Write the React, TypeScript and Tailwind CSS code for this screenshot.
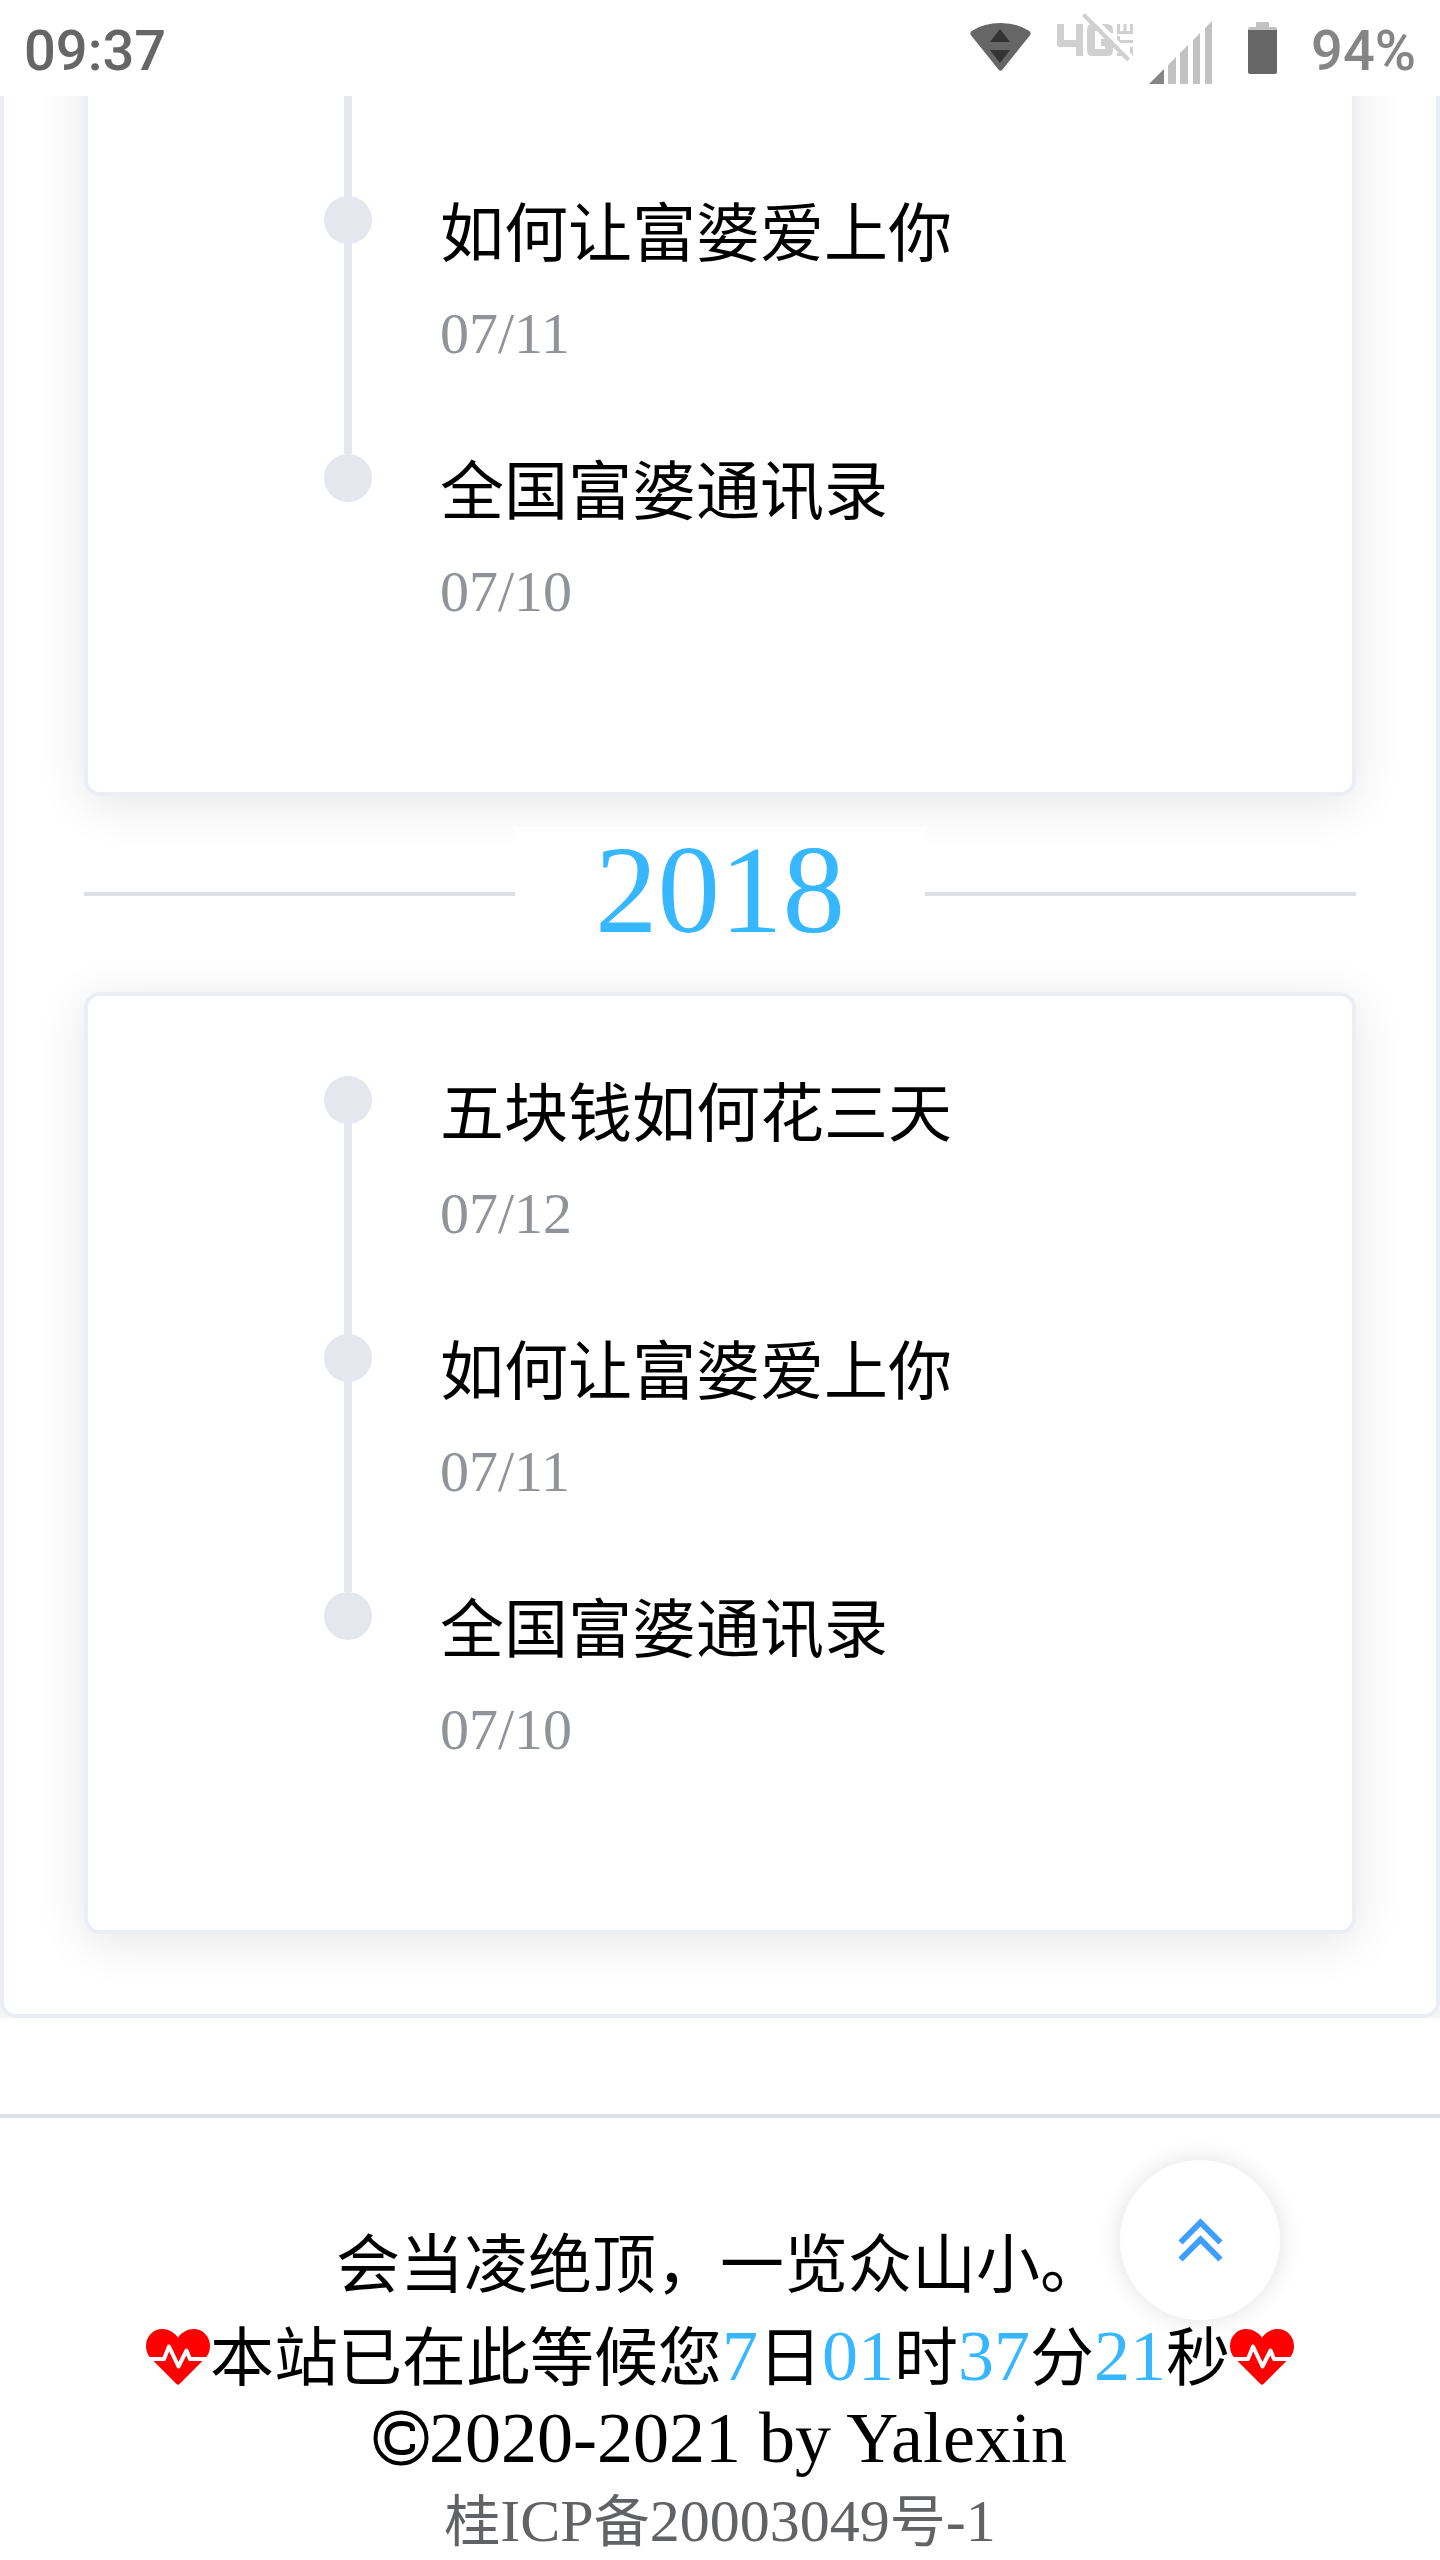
import type { ReactNode } from "react";

type Post = { title: string; date: string };

const posts: Post[] = [
  { title: "五块钱如何花三天", date: "07/12" },
  { title: "如何让富婆爱上你", date: "07/11" },
  { title: "全国富婆通讯录", date: "07/10" },
];

function WifiIcon() {
  return (
    <svg className="h-24 w-[61px]" viewBox="0 0 61 96" aria-hidden="true">
      <path
        d="M1.4 35.800Q-1.200 32.500 2.500 30.500Q14 23 30.500 23Q47 23 58.500 30.500Q62.200 32.500 59.600 35.800L32.500 69.500Q30.500 72 28.500 69.500Z"
        fill="#666"
      />
      <path d="M20 42L30 29L40 42ZM20 50H40L30 63Z" fill="#333" />
    </svg>
  );
}

function MutedLteIcon() {
  return (
    <svg className="h-24 w-[76px]" viewBox="0 0 76 96" aria-hidden="true">
      <path d="M0 24H7V40H19V24H26V56H19V47H3Q0 47 0 44Z" fill="#d0d0d0" />
      <path
        d="M36 24H50Q56 24 56 30V33H48V31H38V49H48V46H44V39H56V50Q56 56 50 56H36Q30 56 30 50V30Q30 24 36 24Z"
        fill="#d0d0d0"
      />
      <path
        d="M60 32.500H76M61.500 24V32M68 24V32M74.500 24V32M61.500 36V48M61 41.500H76M60 54.500H76M74.500 47V54"
        fill="none"
        stroke="#d0d0d0"
        strokeWidth="3"
      />
      <path d="M30 12L76 58.500" stroke="#fff" strokeWidth="4" />
      <path d="M26.500 14.500L71.500 60" stroke="#d0d0d0" strokeWidth="4" />
    </svg>
  );
}

function SignalIcon() {
  return (
    <svg className="h-24 w-[63px]" viewBox="0 0 63 96" aria-hidden="true">
      <path d="M0 84L15 69V84Z" fill="#858585" />
      <path
        d="M19 65L27 57V84H19ZM31 53L39 45V84H31ZM44 40L51 33V84H44ZM56 28L63 21V84H56Z"
        fill="#c2c2c2"
      />
    </svg>
  );
}

function BatteryIcon() {
  return (
    <svg className="h-24 w-[29px]" viewBox="0 0 29 96" aria-hidden="true">
      <path d="M8 22H21V27H27Q29 27 29 30H0Q0 27 2 27H8Z" fill="#c2c2c2" />
      <path d="M0 30H29V72Q29 74 27 74H2Q0 74 0 72Z" fill="#666" />
    </svg>
  );
}

function HeartbeatIcon() {
  return (
    <svg className="h-14 w-16 shrink-0" viewBox="0 0 64 56" aria-hidden="true">
      <path
        d="M32 8.500C28 3 22 0 16.500 0C7 0 0 7.500 0 17C0 22 1.500 26 5 29.500L30.500 55Q32 56.500 33.500 55L59 29.500C62.500 26 64 22 64 17C64 7.500 57 0 47.500 0C42 0 36 3 32 8.500Z"
        fill="#f00"
      />
      <path
        d="M0 30H18L23 17.500L32.500 37.500L40.500 21.500L44 30H64"
        fill="none"
        stroke="#fff"
        strokeWidth="4"
        strokeLinejoin="round"
      />
    </svg>
  );
}

function CopyrightIcon() {
  return (
    <svg className="h-14 w-14 shrink-0" viewBox="0 0 56 56" fill="none" stroke="#000" aria-label="©">
      <circle cx="28" cy="28" r="25.500" strokeWidth="4" />
      <path d="M39.500 21V19Q39.500 13.500 28.500 13.500Q14 13.500 14 28Q14 42.500 28.500 42.500Q39.500 42.500 39.500 37V34" strokeWidth="5" />
    </svg>
  );
}

function TimelineItem({ post, last }: { post: Post; last: boolean }) {
  return (
    <li className="relative h-[258px] pl-28">
      {!last && <span className="absolute top-0 left-4 h-full w-2 bg-[#e4e7ed]" />}
      <span className="absolute top-0 -left-1 size-12 rounded-full bg-[#e4e7ed]" />
      <div className="relative -top-3">
        <h3 className="h-[94px] text-[64px] leading-[88px]">{post.title}</h3>
        <time className="mt-8 block font-['Liberation_Serif',serif] text-[58px] leading-[48px] text-[#909399]">
          {post.date}
        </time>
      </div>
    </li>
  );
}

function Timeline({ items, continued = false }: { items: Post[]; continued?: boolean }) {
  return (
    <ul className="pl-40">
      {continued && (
        <li aria-hidden="true" className="h-[164px] pl-4">
          <span className="block h-full w-2 bg-[#e4e7ed]" />
        </li>
      )}
      {items.map((post, i) => (
        <TimelineItem key={post.title} post={post} last={i === items.length - 1} />
      ))}
    </ul>
  );
}

function YearDivider({ year }: { year: string }) {
  return (
    <div className="flex h-[196px] items-center">
      <span className="h-1 flex-1 bg-[#dcdfe6]" />
      <h2 className="bg-white px-20 pb-2 font-['Liberation_Serif',serif] text-[125px] leading-[126px] text-[#36b7ff]">
        {year}
      </h2>
      <span className="h-1 flex-1 bg-[#dcdfe6]" />
    </div>
  );
}

function Num({ children }: { children: ReactNode }) {
  return <span className="font-['Liberation_Serif',serif] text-[72px] text-[#36b7ff]">{children}</span>;
}

export default function App() {
  return (
    <div className="min-h-screen overflow-hidden bg-white font-['Noto_Sans_CJK_SC',sans-serif] text-black">
      <header className="relative z-10 flex h-24 items-center bg-white px-6 font-['Roboto',sans-serif] text-[56px] leading-[90px] font-medium text-[#666]">
        <span className="mr-auto pt-1.5">09:37</span>
        <WifiIcon />
        <span className="ml-[26px]">
          <MutedLteIcon />
        </span>
        <span className="ml-4">
          <SignalIcon />
        </span>
        <span className="ml-9">
          <BatteryIcon />
        </span>
        <span className="ml-[34px] pt-1.5 text-[#858585]">94%</span>
      </header>

      <main className="bg-[#f5f5f5]">
        <div className="rounded-b-2xl border-x-4 border-b-4 border-[#ebeef5] bg-white px-20 pb-20">
          <section className="-mt-16 rounded-b-2xl border-x-4 border-b-4 border-[#ebeef5] bg-white px-20 pb-20 shadow-[0_8px_48px_rgba(0,0,0,0.1)]">
            <Timeline items={posts.slice(1)} continued />
          </section>
          <YearDivider year="2018" />
          <section className="rounded-2xl border-4 border-[#ebeef5] bg-white p-20 shadow-[0_8px_48px_rgba(0,0,0,0.1)]">
            <Timeline items={posts} />
          </section>
        </div>
      </main>

      <footer className="mt-24 border-t-4 border-[#dcdfe6] pt-24 text-center text-[64px]">
        <p className="h-24 leading-[90px]">会当凌绝顶，一览众山小。</p>
        <p className="flex h-[94px] items-center justify-center leading-[88px]">
          <HeartbeatIcon />
          <span className="pb-1.5 whitespace-nowrap">
            本站已在此等候您<Num>7</Num>日<Num>01</Num>时<Num>37</Num>分<Num>21</Num>秒
          </span>
          <HeartbeatIcon />
        </p>
        <p className="flex h-[68px] items-center justify-center font-['Liberation_Serif',serif] text-[72px] leading-[68px]">
          <CopyrightIcon />
          2020-2021 by Yalexin
        </p>
        <p className="mt-2 h-20 text-[56px] leading-[74px] text-[#606266]">
          <a href="#icp">
            桂<span className="font-['Liberation_Serif',serif] text-[60px]">ICP</span>备
            <span className="font-['Liberation_Serif',serif] text-[60px]">20003049</span>号
            <span className="font-['Liberation_Serif',serif] text-[60px]">-1</span>
          </a>
        </p>
      </footer>

      <button
        type="button"
        aria-label="回到顶部"
        className="fixed right-40 bottom-60 flex size-40 items-center justify-center rounded-full bg-white shadow-[0_0_24px_rgba(0,0,0,0.12)]"
      >
        <svg className="h-11 w-[45px]" viewBox="0 0 45 44" fill="none" stroke="#409eff" strokeWidth="6" aria-hidden="true">
          <path d="M2.500 24.500L22.500 4.500L42.500 24.500M2.500 41.500L22.500 21.500L42.500 41.500" />
        </svg>
      </button>
    </div>
  );
}
